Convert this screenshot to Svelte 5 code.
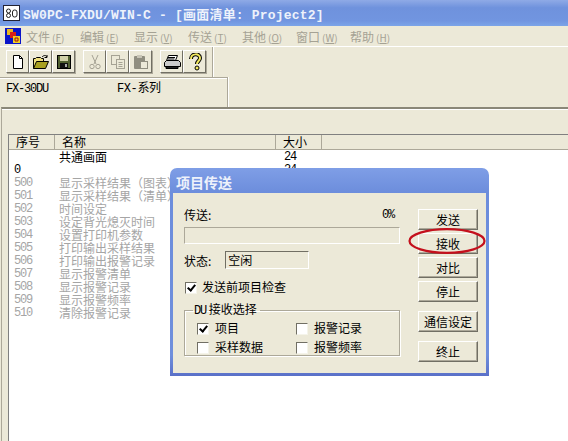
<script>
  const menus = [['文件', 'F'], ['编辑', 'E'], ['显示', 'V'], ['传送', 'T'], ['其他', 'O'], ['窗口', 'W'], ['帮助', 'H']];

  const screens = [
    ['500', '显示采样结果（图表）'],
    ['501', '显示采样结果（清单）'],
    ['502', '时间设定'],
    ['503', '设定背光熄灭时间'],
    ['504', '设置打印机参数'],
    ['505', '打印输出采样结果'],
    ['506', '打印输出报警记录'],
    ['507', '显示报警清单'],
    ['508', '显示报警记录'],
    ['509', '显示报警频率'],
    ['510', '清除报警记录']
  ];

  const buttons = [
    { label: '发送', gap: 0 },
    { label: '接收', gap: 3 },
    { label: '对比', gap: 3 },
    { label: '停止', gap: 3 },
    { label: '通信设定', gap: 9 },
    { label: '终止', gap: 9 }
  ];
</script>

<div class="app">
  <header class="titlebar">
    <svg class="appicon" width="17" height="16" viewBox="0 0 17 16">
      <rect x="0.5" y="0.5" width="16" height="15" fill="#fff" stroke="#223"/>
      <circle cx="5.5" cy="6" r="2" fill="none" stroke="#222"/>
      <circle cx="5.5" cy="10.5" r="2" fill="none" stroke="#222"/>
      <rect x="9.5" y="5" width="4.5" height="7" rx="2" fill="none" stroke="#222"/>
    </svg>
    <span class="title">SW0PC-FXDU/WIN-C - [画面清单: Project2]</span>
  </header>

  <nav class="menubar">
    <svg class="menuicon" width="16" height="16" viewBox="0 0 16 16">
      <rect width="16" height="16" fill="#0a14c8"/>
      <rect x="2" y="1" width="6" height="6" fill="#e8b820"/>
      <rect x="5" y="4" width="6" height="6" fill="#d82018"/>
      <rect x="8" y="8" width="7" height="7" fill="#f0d020"/>
      <path d="M10 10h3v3h-3z" fill="none" stroke="#a01010"/>
    </svg>
    {#each menus as [name, key]}
      <span class="menu">{name}<small>(<u>{key}</u>)</small></span>
    {/each}
  </nav>

  <div class="toolbar">
    <div class="tools">
      <div class="group">
        <button class="tool" aria-label="新建">
          <svg width="16" height="16" viewBox="0 0 16 16"><path d="M3.5 1.5h6l3 3v10h-9z" fill="#fff" stroke="#000"/><path d="M9.5 1.5v3h3" fill="none" stroke="#000"/></svg>
        </button>
        <button class="tool" aria-label="打开">
          <svg width="18" height="16" viewBox="0 0 18 16"><path d="M1.5 14.5v-10h2l1-1h4l1 1h2v3" fill="#f0e080" stroke="#000"/><path d="M1.5 14.5l3-7h12l-3 7z" fill="#a8a020" stroke="#000"/><path d="M10 3c2-2 4-2 5 0M15 1v2.500h-2.500" fill="none" stroke="#000"/></svg>
        </button>
        <button class="tool" aria-label="保存">
          <svg width="16" height="16" viewBox="0 0 16 16"><rect x="1.500" y="1.500" width="13" height="13" fill="#506030" stroke="#000"/><rect x="4" y="2" width="8" height="5" fill="#d0d0a8"/><rect x="4" y="9" width="8" height="5" fill="#111"/><rect x="9" y="10" width="2" height="3" fill="#aaa"/></svg>
        </button>
      </div>
      <div class="group">
        <button class="tool" aria-label="剪切">
          <svg width="16" height="16" viewBox="0 0 16 16" fill="none" stroke="#a5a294"><path d="M5 1l4 9M11 1l-4 9"/><circle cx="5" cy="12.500" r="2.200"/><circle cx="11" cy="12.500" r="2.200"/></svg>
        </button>
        <button class="tool" aria-label="复制">
          <svg width="16" height="16" viewBox="0 0 16 16" fill="#ece9d8" stroke="#a5a294"><rect x="1.500" y="1.500" width="8" height="9"/><rect x="6.500" y="5.500" width="8" height="9"/><path d="M8.500 8.500h4M8.500 10.500h4M8.500 12.500h4"/></svg>
        </button>
        <button class="tool" aria-label="粘贴">
          <svg width="16" height="16" viewBox="0 0 16 16"><rect x="1" y="2" width="11" height="13" rx="1" fill="#908e80"/><rect x="4" y="1" width="5" height="3" fill="#c8c5b6"/><rect x="7.500" y="7.500" width="7" height="7" fill="#ece9d8" stroke="#908e80"/></svg>
        </button>
      </div>
      <div class="group">
        <button class="tool" aria-label="打印">
          <svg width="18" height="16" viewBox="0 0 18 16"><path d="M5.500 1.500h9l-2 5h-9z" fill="#fff" stroke="#000"/><path d="M1.500 8.500l2-2h12l2 2v4h-16z" fill="#ccc" stroke="#000"/><path d="M3 12.500h12v2h-12z" fill="#222" stroke="#000"/><path d="M5 3.500h7M4.500 5h7" stroke="#000"/></svg>
        </button>
        <button class="tool" aria-label="帮助">
          <svg width="14" height="18" viewBox="0 0 14 18"><path d="M3 6c0-6 9-6 9-1 0 3-3 3-3 6" fill="none" stroke="#000" stroke-width="4"/><path d="M3 6c0-6 9-6 9-1 0 3-3 3-3 6" fill="none" stroke="#f0e860" stroke-width="2"/><circle cx="9" cy="15" r="2" fill="#f0e860" stroke="#000"/></svg>
        </button>
      </div>
    </div>
  </div>

  <div class="device">
    <span class="model">FX-30DU</span>
    <span class="series">FX-系列</span>
  </div>

  <div class="workspace">
    <main class="list">
      <div class="head">
        <span class="col-no">序号</span>
        <span class="col-name">名称</span>
        <span class="col-size">大小</span>
        <span class="col-rest"></span>
      </div>
      <div class="row">
        <span class="col-no"></span>
        <span class="col-name">共通画面</span>
        <span class="col-size">24</span>
      </div>
      <div class="row">
        <span class="col-no">0</span>
        <span class="col-name"></span>
        <span class="col-size">24</span>
      </div>
      {#each screens as [no, name]}
        <div class="row off">
          <span class="col-no">{no}</span>
          <span class="col-name">{name}</span>
        </div>
      {/each}
    </main>
  </div>

  <section class="dialog">
    <h2>项目传送</h2>
    <div class="dialog-body">
      <div class="form">
        <div class="progress-label"><span>传送:</span><span class="latin">0%</span></div>
        <div class="progress"></div>
        <div class="status">
          <span>状态:</span>
          <span class="status-box">空闲</span>
        </div>
        <label class="check first"><span class="box on"></span><span class="text">发送前项目检查</span></label>
        <fieldset>
          <legend><span class="latin">DU</span> 接收选择</legend>
          <div class="options">
            <label class="check"><span class="box on"></span><span class="text">项目</span></label>
            <label class="check"><span class="box"></span><span class="text">报警记录</span></label>
            <label class="check"><span class="box"></span><span class="text">采样数据</span></label>
            <label class="check"><span class="box"></span><span class="text">报警频率</span></label>
          </div>
        </fieldset>
      </div>
      <div class="actions">
        {#each buttons as b}
          <button class="action" style="margin-top: {b.gap}px">{b.label}</button>
        {/each}
      </div>
    </div>
    <svg class="ring" width="78" height="26" viewBox="0 0 78 26">
      <ellipse cx="39" cy="13" rx="37.500" ry="11.800" fill="none" stroke="#c4101c" stroke-width="2.200"/>
    </svg>
  </section>
</div>

<style>
  :global(body) {
    background: #ece9d8;
  }

  .app {
    position: relative;
    width: 568px;
    height: 441px;
    overflow: hidden;
    display: flex;
    flex-direction: column;
    background: #ece9d8;
    font-family: "Noto Sans CJK SC", "Liberation Sans", sans-serif;
    font-size: 12px;
    color: #000;
  }

  .titlebar {
    height: 26px;
    flex: none;
    display: flex;
    align-items: center;
    gap: 3px;
    padding-left: 3px;
    background: linear-gradient(#8faae6, #6f92dd 30%, #7195e0 80%, #7ba4e8);
  }

  .title {
    font-family: "Liberation Mono", "Noto Sans CJK SC", monospace;
    font-weight: bold;
    font-size: 13px;
    letter-spacing: 0.2px;
    color: #eef2fb;
    white-space: nowrap;
  }

  .menubar {
    height: 20px;
    flex: none;
    display: flex;
    align-items: center;
    padding-left: 5px;
    color: #a5a294;
    box-sizing: border-box;
  }

  .menuicon {
    margin-right: 5px;
  }

  .menu {
    width: 54px;
    flex: none;
    white-space: nowrap;
  }

  .menu small {
    font-size: 10px;
    margin-left: 2px;
  }

  .toolbar {
    height: 31px;
    flex: none;
    border-top: 1px solid #fff;
    box-sizing: border-box;
    display: flex;
  }

  .tools {
    width: 213px;
    padding: 3px 0 0 6px;
    box-sizing: border-box;
    display: flex;
    gap: 8px;
    border-right: 1px solid #aca899;
    box-shadow: 1px 0 0 #fff;
  }

  .group {
    display: flex;
  }

  .tool {
    width: 23px;
    height: 23px;
    padding: 0;
    display: flex;
    align-items: center;
    justify-content: center;
    background: #ece9d8;
    border: 1px solid;
    border-color: #fff #716f64 #716f64 #fff;
    box-shadow: 1px 1px 0 #aca899;
  }

  .device {
    height: 30px;
    flex: none;
    width: 228px;
    box-sizing: border-box;
    padding: 4px 0 0 6px;
    display: flex;
    border-top: 1px solid #aca899;
    border-right: 1px solid #aca899;
    box-shadow: inset 0 1px 0 #fff, 1px 0 0 #fff;
    font-family: "Liberation Mono", "Noto Sans CJK SC", monospace;
    font-size: 12px;
    letter-spacing: -1.2px;
    line-height: 14px;
  }

  .model {
    width: 111px;
  }

  .series {
    letter-spacing: -0.4px;
  }

  .workspace {
    flex: 1;
    min-height: 0;
    display: flex;
    margin-left: 1px;
    padding: 25px 0 0 6px;
    border-top: 2px solid #8a8778;
    border-left: 1px solid #aca899;
    box-shadow: inset 0 1px 0 #fff;
  }

  .list {
    flex: 1;
    background: #fff;
    border-left: 1px solid #808080;
    border-top: 1px solid #808080;
  }

  .head {
    height: 14px;
    display: flex;
    background: #ece9d8;
    border-bottom: 1px solid #aca899;
    line-height: 14px;
  }

  .head span {
    border-right: 1px solid #aca899;
    box-sizing: border-box;
  }

  .head .col-no,
  .head .col-name,
  .head .col-size {
    padding-left: 7px;
  }

  .head .col-rest {
    border-right: none;
    flex: 1;
  }

  .col-no {
    width: 46px;
    padding-left: 5px;
    box-sizing: border-box;
    flex: none;
  }

  .col-name {
    width: 221px;
    padding-left: 4px;
    box-sizing: border-box;
    flex: none;
    white-space: nowrap;
  }

  .col-size {
    width: 46px;
    padding-left: 8px;
    box-sizing: border-box;
    flex: none;
  }

  .row {
    height: 13px;
    display: flex;
    line-height: 13px;
  }

  .row .col-no,
  .row .col-size {
    font-family: "Liberation Mono", monospace;
    font-size: 12px;
    letter-spacing: -1.2px;
    padding-top: 1px;
  }

  .off {
    color: #a5a5a5;
  }

  .dialog {
    position: absolute;
    left: 170px;
    top: 168px;
    width: 319px;
    height: 208px;
    box-sizing: border-box;
    display: flex;
    flex-direction: column;
    background: linear-gradient(#7f9ee6, #6c8ddc 12%, #6f8fdc 90%, #5a70c8);
    border-radius: 7px 7px 0 0;
    padding: 0 3px 3px;
  }

  .dialog h2 {
    margin: 0;
    height: 25px;
    padding: 5px 0 0 3px;
    box-sizing: border-box;
    font-size: 14px;
    line-height: 18px;
    font-weight: bold;
    color: #eef2fb;
  }

  .dialog-body {
    flex: 1;
    display: flex;
    background: #ece9d8;
    padding: 16px 0 0 11px;
  }

  .form {
    width: 216px;
    flex: none;
  }

  .progress-label {
    display: flex;
    justify-content: space-between;
    padding-right: 6px;
    line-height: 12px;
  }

  .progress {
    height: 17px;
    margin-top: 6px;
    box-sizing: border-box;
    border: 1px solid;
    border-color: #aca899 #fff #fff #aca899;
  }

  .status {
    display: flex;
    align-items: center;
    gap: 14px;
    margin-top: 7px;
  }

  .status-box {
    width: 84px;
    height: 18px;
    box-sizing: border-box;
    padding-left: 2px;
    line-height: 15px;
    border: 1px solid;
    border-color: #716f64 #fff #fff #716f64;
  }

  .check {
    display: flex;
    align-items: center;
    gap: 6px;
    height: 14px;
    line-height: 14px;
    white-space: nowrap;
  }

  .check .text {
    margin-bottom: 3px;
  }

  .check.first {
    margin-top: 12px;
    gap: 5px;
    padding-left: 1px;
  }

  .box {
    position: relative;
    width: 12px;
    height: 12px;
    flex: none;
    box-sizing: border-box;
    background: #fff;
    border: 1px solid;
    border-color: #716f64 #f5f4ea #f5f4ea #716f64;
  }

  .box.on::after {
    content: "";
    position: absolute;
    left: 3px;
    top: 0px;
    width: 3px;
    height: 6px;
    border: solid #000;
    border-width: 0 2px 2px 0;
    transform: rotate(40deg);
  }

  fieldset {
    margin: 7px 0 0;
    padding: 0 0 0 12px;
    height: 54px;
    box-sizing: border-box;
    border: 1px solid #aca899;
    box-shadow: 1px 1px 0 #fff, inset 1px 1px 0 #fff;
  }

  legend {
    margin-left: -4px;
    padding: 0 3px 0 1px;
    font-size: 12px;
    line-height: 14px;
    white-space: pre;
  }

  .latin {
    font-family: "Liberation Mono", monospace;
    font-size: 12px;
    letter-spacing: -1.2px;
  }

  .options {
    display: grid;
    grid-template-columns: 99px 1fr;
    row-gap: 5px;
    padding-top: 4px;
  }

  .actions {
    margin-left: 18px;
    width: 60px;
    display: flex;
    flex-direction: column;
  }

  .action {
    width: 60px;
    height: 21px;
    flex: none;
    padding: 0;
    font: inherit;
    line-height: 17px;
    background: #ece9d8;
    border: 1px solid;
    border-color: #fff #716f64 #716f64 #fff;
    box-shadow: inset -1px -1px 0 #aca899;
    color: #000;
  }

  .ring {
    position: absolute;
    left: 238px;
    top: 60px;
  }
</style>
